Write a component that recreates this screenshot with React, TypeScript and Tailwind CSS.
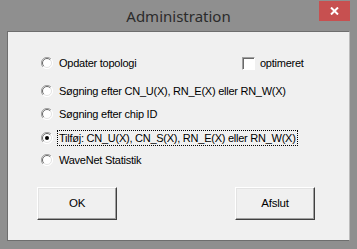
import React from "react";

const Radio = ({ checked }: { checked?: boolean }) => (
  <svg width="12" height="12" viewBox="0 0 12 12" className="shrink-0">
    <circle cx="6" cy="6" r="5.5" fill="#ffffff" />
    <path d="M10 2 A5.5 5.5 0 0 0 2 10" stroke="#a0a0a0" strokeWidth="1" fill="none" />
    <path d="M9.2 2.8 A4.5 4.5 0 0 0 2.8 9.2" stroke="#696969" strokeWidth="1" fill="none" />
    <path d="M2 10 A5.5 5.5 0 0 0 10 2" stroke="#ffffff" strokeWidth="1" fill="none" />
    <path d="M2.8 9.2 A4.5 4.5 0 0 0 9.2 2.8" stroke="#e3e3e3" strokeWidth="1" fill="none" />
    {checked && <circle cx="6" cy="6" r="2" fill="#000000" />}
  </svg>
);

const Option = ({
  label,
  checked,
  className,
}: {
  label: string;
  checked?: boolean;
  className?: string;
}) => (
  <div className={`flex items-center h-[16px] ${className ?? ""}`}>
    <Radio checked={checked} />
    <span
      className={`ml-[5px] px-[1px] leading-[14px] ${
        checked ? "outline outline-1 outline-dotted outline-black" : ""
      }`}
    >
      {label}
    </span>
  </div>
);

const Button = ({ label }: { label: string }) => (
  <button className="w-[80px] h-[33px] bg-[#f0f0f0] border border-t-white border-l-white border-r-[#404040] border-b-[#404040] shadow-[inset_-1px_-1px_0_#a0a0a0,inset_1px_1px_0_#e3e3e3] text-black text-[11.5px]">
    {label}
  </button>
);

export default function App() {
  return (
    <div className="w-[357px] h-[249px] bg-[#8f8f8f] flex flex-col overflow-hidden">
      <div className="h-[31px] grid grid-cols-[1fr_auto_1fr] items-start">
        <div />
        <div
          className="pt-[5px] text-[15px] text-[#2b2b2b]"
          style={{ fontFamily: '"Noto Sans", sans-serif' }}
        >
          Administration
        </div>
        <div className="flex justify-end pr-[7px] pt-[1px]">
          <div className="w-[31px] h-[20px] bg-[#c75050] flex items-center justify-center">
            <svg width="9" height="8" viewBox="0 0 9 8">
              <path d="M1 0.5 L8 7.5 M8 0.5 L1 7.5" stroke="#ffffff" strokeWidth="2" />
            </svg>
          </div>
        </div>
      </div>
      <div
        className="mx-[7px] h-[210px] bg-[#f0f0f0] border border-[#6e6e6e] border-r-[#bcbcbc] text-[11px] tracking-[-0.25px] text-black flex flex-col pl-[33px]"
        style={{ fontFamily: '"Liberation Sans", Arial, sans-serif' }}
      >
        <div className="flex items-center mt-[23px]">
          <div className="w-[201px]">
            <Option label="Opdater topologi" />
          </div>
          <div className="flex items-center h-[16px]">
            <div className="w-[13px] h-[13px] bg-white border border-t-[#a0a0a0] border-l-[#a0a0a0] border-r-white border-b-white shadow-[inset_1px_1px_0_#696969]" />
            <span className="ml-[5px]">optimeret</span>
          </div>
        </div>
        <Option className="mt-[12px]" label="Søgning efter CN_U(X), RN_E(X) eller RN_W(X)" />
        <Option className="mt-[7px]" label="Søgning efter chip ID" />
        <Option className="mt-[8px]" checked label="Tilføj: CN_U(X), CN_S(X), RN_E(X) eller RN_W(X)" />
        <Option className="mt-[6px]" label="WaveNet Statistik" />
        <div className="flex mt-[19px] -ml-[4px] gap-[118px]">
          <Button label="OK" />
          <Button label="Afslut" />
        </div>
      </div>
    </div>
  );
}
